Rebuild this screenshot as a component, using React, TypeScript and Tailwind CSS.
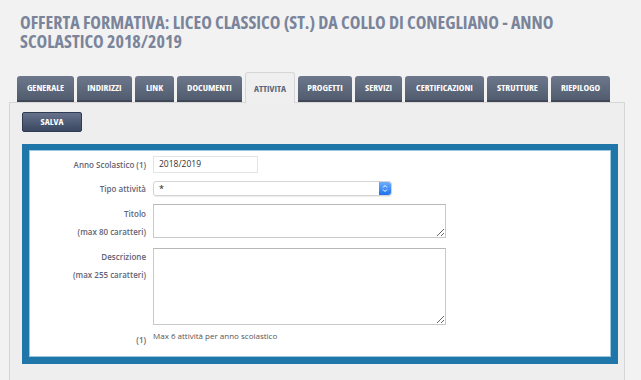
const tabs = [
  { label: "GENERALE", w: "w-[57px]" },
  { label: "INDIRIZZI", w: "w-[55px]" },
  { label: "LINK", w: "w-[39px]" },
  { label: "DOCUMENTI", w: "w-[65px]" },
  { label: "ATTIVITA", w: "w-[50px]", active: true },
  { label: "PROGETTI", w: "w-[54px]" },
  { label: "SERVIZI", w: "w-[47px]" },
  { label: "CERTIFICAZIONI", w: "w-[79px]" },
  { label: "STRUTTURE", w: "w-[61px]" },
  { label: "RIEPILOGO", w: "w-[59px]" },
];

const condensed = "font-['Open_Sans'] font-bold [font-stretch:75%]";

function SelectArrows() {
  return (
    <div className="flex h-full w-[12px] items-center justify-center rounded-r-[3px] bg-gradient-to-b from-[#6aaefc] to-[#1e6ff0]">
      <svg width="6" height="9" viewBox="0 0 6 9" fill="none" stroke="white" strokeWidth="1">
        <path d="M1 3.5 L3 1.5 L5 3.5" />
        <path d="M1 5.5 L3 7.5 L5 5.5" />
      </svg>
    </div>
  );
}

export default function App() {
  return (
    <div className="h-[380px] w-[641px] overflow-hidden bg-[#f2f2f2] font-['Open_Sans',sans-serif]">
      {/* Title */}
      <h1 className={`${condensed} pl-[20px] pt-[13px] text-[18px] leading-[19px] text-[#7a849a]`}>
        <div>OFFERTA FORMATIVA: LICEO CLASSICO (ST.) DA COLLO DI CONEGLIANO - ANNO</div>
        <div>SCOLASTICO 2018/2019</div>
      </h1>

      {/* Tabs */}
      <div className="mt-[21px] flex items-end gap-[3px] pl-[17px]">
        {tabs.map((t) =>
          t.active ? (
            <div
              key={t.label}
              className={`${t.w} relative z-10 -mb-px flex h-[31px] items-center justify-center rounded-t-[3px] border border-b-0 border-[#d6d6d6] bg-[#eeefee] pt-[2px] text-[9.5px] text-[#5d667a] ${condensed}`}
            >
              {t.label}
            </div>
          ) : (
            <div
              key={t.label}
              className={`${t.w} flex h-[26px] items-center justify-center rounded-t-[3px] border-b-2 border-[#3f4758] bg-gradient-to-b from-[#6e788c] to-[#525c6f] pt-[1px] text-[9.5px] text-white ${condensed}`}
            >
              {t.label}
            </div>
          )
        )}
      </div>

      {/* Panel */}
      <div className="ml-[9px] h-[300px] w-[616px] border border-b-0 border-[#d6d6d6] bg-[#edeeed] pl-[12px] pt-[9px]">
        <button
          className={`${condensed} flex h-[20px] w-[60px] items-center justify-center rounded-[2px] border border-[#2f3b52] bg-gradient-to-b from-[#66728c] to-[#3b4862] text-[9.5px] text-white`}
        >
          SALVA
        </button>

        <div className="mt-[12px] w-[596px] border-[7px] border-t-[6px] border-[#1e76a9] bg-white">
          <div className="border border-[#9cc6df] pb-[10px] pt-[5px] text-[8px]">
            {/* Anno */}
            <div className="flex items-center">
              <div className="w-[116px] text-right font-semibold text-[#5f6476]">Anno Scolastico (1)</div>
              <div className="ml-[7px] flex h-[17px] w-[105px] items-center border border-[#e4e4e4] pl-[5px] text-[8.5px] text-[#333]">
                2018/2019
              </div>
            </div>

            {/* Tipo attività */}
            <div className="mt-[8px] flex items-center">
              <div className="w-[116px] text-right font-semibold text-[#5f6476]">Tipo attività</div>
              <div className="ml-[7px] flex h-[15px] w-[239px] items-center rounded-[3px] border border-[#d4d4d4] shadow-[0_1px_1px_rgba(0,0,0,0.08)]">
                <div className="flex-1 pl-[5px] text-[9px] leading-none text-[#222]">*</div>
                <SelectArrows />
              </div>
            </div>

            {/* Titolo */}
            <div className="mt-[8px] flex items-start">
              <div className="w-[116px] pt-px text-right font-semibold leading-[18px] text-[#5f6476]">
                <div>Titolo</div>
                <div>(max 80 caratteri)</div>
              </div>
              <textarea className="ml-[7px] block h-[34px] w-[293px] resize border border-[#c9c9c9] border-t-[#b8b8b8] bg-white outline-none" />
            </div>

            {/* Descrizione */}
            <div className="mt-[7px] flex items-start">
              <div className="w-[116px] text-right font-semibold leading-[18px] text-[#5f6476]">
                <div>Descrizione</div>
                <div>(max 255 caratteri)</div>
              </div>
              <textarea className="ml-[7px] block h-[77px] w-[293px] resize border border-[#c9c9c9] border-t-[#b8b8b8] bg-white outline-none" />
            </div>

            {/* Nota */}
            <div className="mt-[5px] flex items-start">
              <div className="w-[116px] pt-[4px] text-right font-semibold text-[#5f6476]">(1)</div>
              <div className="ml-[7px] text-[8px] text-[#555]">Max 6 attività per anno scolastico</div>
            </div>
          </div>
        </div>
      </div>
    </div>
  );
}
